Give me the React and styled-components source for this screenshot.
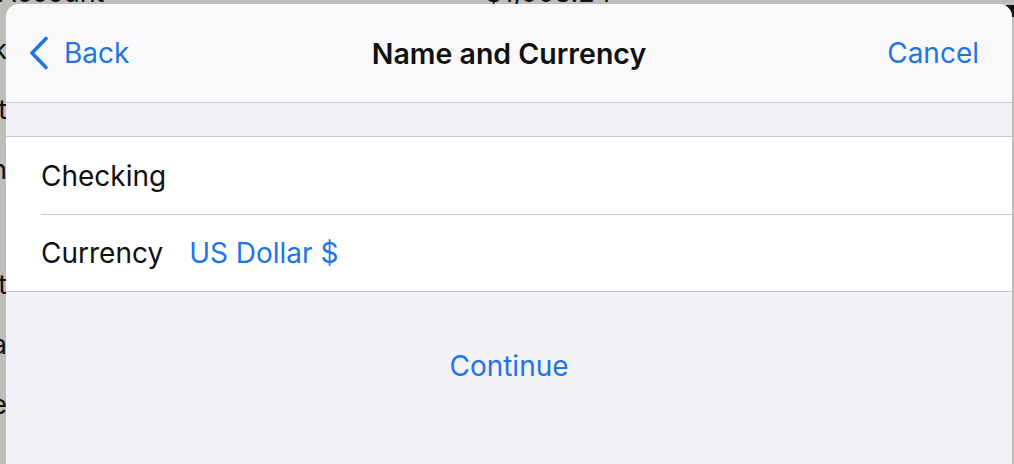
import React from 'react'
import styled, { createGlobalStyle } from 'styled-components'

const palette = {
  backdrop: '#bdbdbb',
  ink: '#111111',
  blue: '#1f74e6',
  nav: '#f9f9fb',
  grouped: '#f2f2f7',
  line: '#c8c7cc',
}

const GlobalStyle = createGlobalStyle`
  html, body {
    margin: 0;
    padding: 0;
    background: ${palette.backdrop};
    overflow: hidden;
  }
  body {
    font-family: Inter, "Noto Sans", "Liberation Sans", sans-serif;
    -webkit-font-smoothing: antialiased;
  }
`

const Screen = styled.div`
  position: relative;
  width: 1014px;
  height: 464px;
  overflow: hidden;
  background: ${palette.backdrop};
`

/* the list that sits underneath the sheet */
const Backdrop = styled.div`
  display: flex;
  flex-direction: column;
  font-size: 27px;
  color: ${palette.ink};
`

const BackdropTop = styled.div`
  display: flex;
  height: 20px;
  margin-top: -17px;
  line-height: 20px;
`

const BackdropTitle = styled.span`
  width: 487px;
  margin-left: -2px;
`

const BackdropRow = styled.div`
  display: flex;
  justify-content: flex-end;
  width: 7px;
  height: 60px;
  overflow: hidden;
  white-space: nowrap;
  line-height: 60px;
  margin-top: ${(p) => p.$gap || 0}px;
`

const Corner = styled.div`
  position: absolute;
  top: 5px;
  right: 0;
  width: 8px;
  height: 12px;
  background: #111;
`

const Sheet = styled.div`
  position: absolute;
  top: 4px;
  left: 6px;
  width: 1006px;
  bottom: -20px;
  border-radius: 13px 13px 0 0;
  overflow: hidden;
  background: ${palette.grouped};
  display: flex;
  flex-direction: column;
`

const NavBar = styled.div`
  display: grid;
  grid-template-columns: 1fr auto 1fr;
  align-items: center;
  height: 98px;
  padding: 0 33px;
  background: ${palette.nav};
  border-bottom: 1px solid ${palette.line};
`

const NavButton = styled.button`
  display: flex;
  align-items: center;
  gap: 15px;
  justify-self: ${(p) => (p.$end ? 'end' : 'start')};
  margin-left: ${(p) => (p.$back ? -12 : 0)}px;
  padding: 0;
  border: 0;
  background: none;
  font: inherit;
  font-size: 28px;
  color: ${palette.blue};
  cursor: pointer;
`

const Title = styled.h1`
  margin: 0;
  font-size: 28.5px;
  font-weight: 600;
  color: ${palette.ink};
`

const Spacer = styled.div`
  height: 33px;
  border-bottom: 1px solid ${palette.line};
`

const Group = styled.div`
  background: #fff;
  padding-left: 35px;
  border-bottom: 1px solid ${palette.line};
`

const Row = styled.div`
  display: flex;
  align-items: center;
  gap: 26px;
  height: ${(p) => (p.$first ? 77 : 76)}px;
  font-size: 28px;
  color: ${palette.ink};
  border-bottom: ${(p) => (p.$first ? `1px solid ${palette.line}` : '0')};
`

const Value = styled.span`
  color: ${palette.blue};
`

const Footer = styled.div`
  display: flex;
  justify-content: center;
  padding-top: 57px;
`

const Chevron = () => (
  <svg width="22" height="34" viewBox="0 0 22 34" fill="none">
    <path
      d="M19 2.5 L5 17 L19 31.5"
      stroke="currentColor"
      strokeWidth="3.6"
      strokeLinecap="round"
      strokeLinejoin="round"
    />
  </svg>
)

const App = () => (
  <Screen>
    <GlobalStyle />
    <Backdrop>
      <BackdropTop>
        <BackdropTitle>Account</BackdropTitle>
        <span>$1,008.24 ›</span>
      </BackdropTop>
      <BackdropRow $gap={17}>Bank</BackdropRow>
      <BackdropRow>Credit</BackdropRow>
      <BackdropRow>Loan</BackdropRow>
      <BackdropRow />
      <BackdropRow $gap={-5}>Asset</BackdropRow>
      <BackdropRow>Data</BackdropRow>
      <BackdropRow>Save</BackdropRow>
    </Backdrop>
    <Corner />
    <Sheet>
      <NavBar>
        <NavButton $back>
          <Chevron />
          Back
        </NavButton>
        <Title>Name and Currency</Title>
        <NavButton $end>Cancel</NavButton>
      </NavBar>
      <Spacer />
      <Group>
        <Row $first>Checking</Row>
        <Row>
          Currency
          <Value>US Dollar $</Value>
        </Row>
      </Group>
      <Footer>
        <NavButton>Continue</NavButton>
      </Footer>
    </Sheet>
  </Screen>
)

export default App
